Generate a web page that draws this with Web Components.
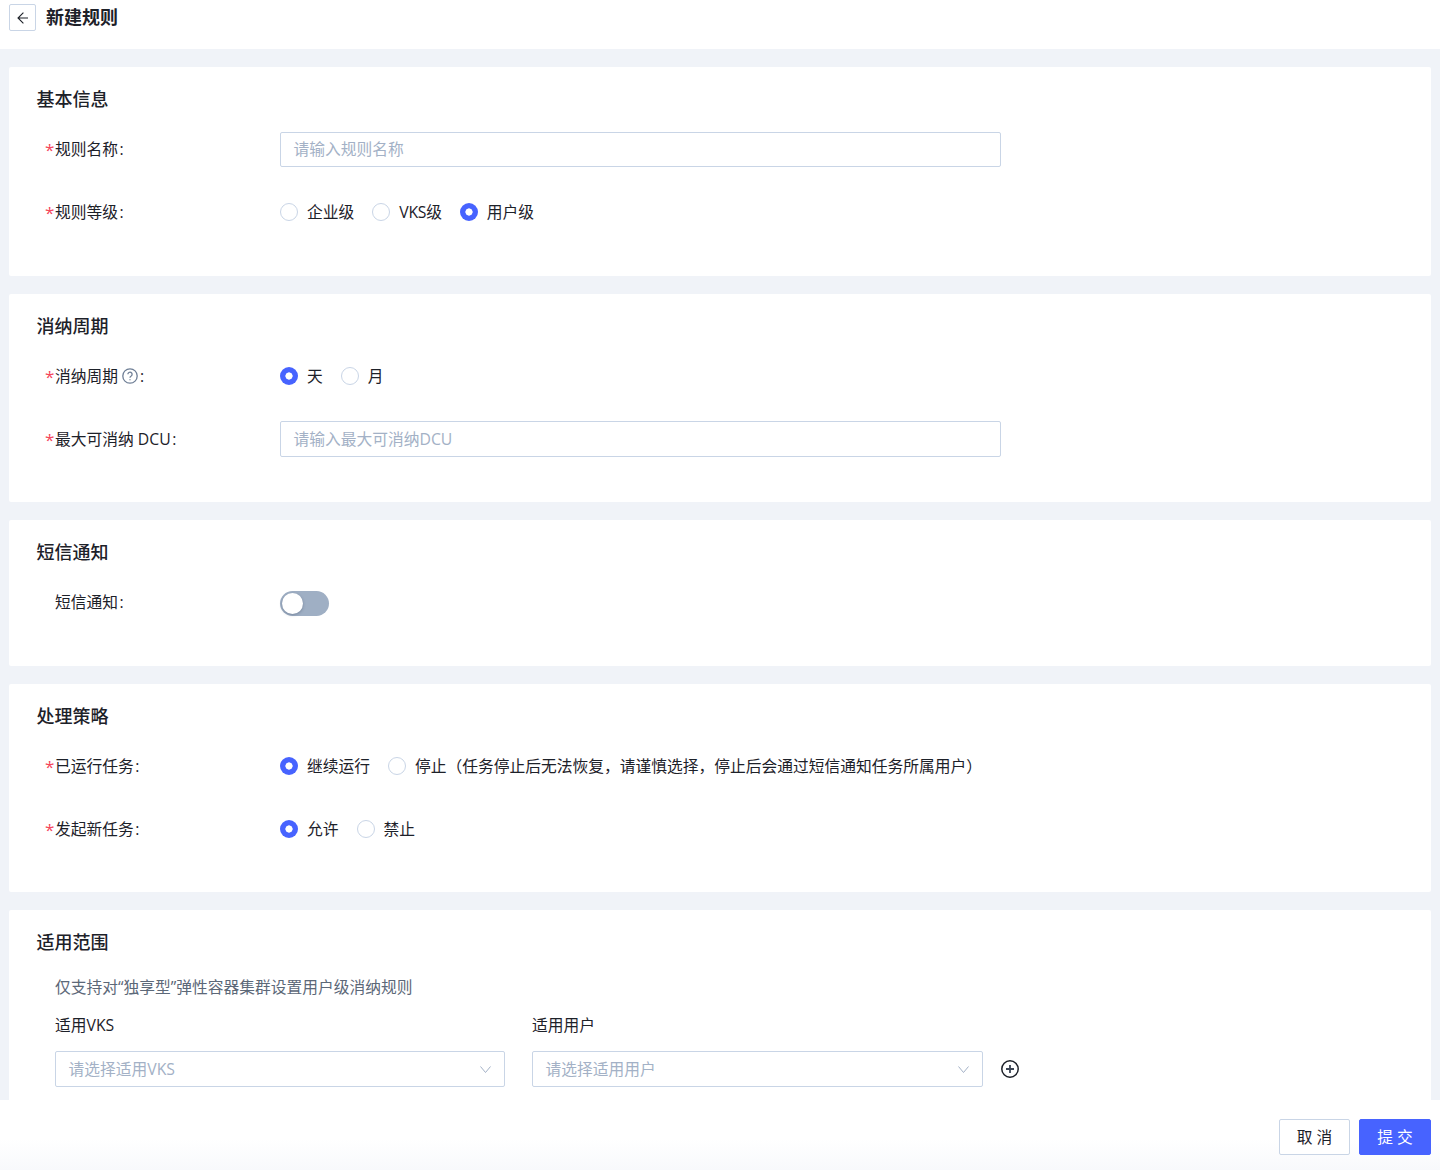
<!DOCTYPE html>
<html lang="zh">
<head>
<meta charset="utf-8">
<title>新建规则</title>
<style>
html, body { margin: 0; height: 1170px; overflow: hidden; }
body {
    background: #f0f3f8;
    color: #1d2129;
    font-family: "Open Sans", "Noto Sans CJK SC", sans-serif;
    font-size: 15.75px;
}
rule-page { height: 1170px; }
</style>
</head>
<body>
<rule-page>
    <page-header slot="header">新建规则</page-header>

    <form-card title="基本信息" height="209">
        <form-row label="规则名称" required>
            <text-input placeholder="请输入规则名称" height="35"></text-input>
        </form-row>
        <form-row label="规则等级" required>
            <radio-option>企业级</radio-option>
            <radio-option style="letter-spacing: -.25px">VKS级</radio-option>
            <radio-option checked>用户级</radio-option>
        </form-row>
    </form-card>

    <form-card title="消纳周期" height="208">
        <form-row label="消纳周期" required help>
            <radio-option checked>天</radio-option>
            <radio-option>月</radio-option>
        </form-row>
        <form-row label="最大可消纳 DCU" required>
            <text-input placeholder="请输入最大可消纳DCU" height="36"></text-input>
        </form-row>
    </form-card>

    <form-card title="短信通知" height="146">
        <form-row label="短信通知">
            <toggle-switch></toggle-switch>
        </form-row>
    </form-card>

    <form-card title="处理策略" height="208">
        <form-row label="已运行任务" required>
            <radio-option checked>继续运行</radio-option>
            <radio-option>停止（任务停止后无法恢复，请谨慎选择，停止后会通过短信通知任务所属用户）</radio-option>
        </form-row>
        <form-row label="发起新任务" required>
            <radio-option checked>允许</radio-option>
            <radio-option>禁止</radio-option>
        </form-row>
    </form-card>

    <form-card title="适用范围" height="260">
        <scope-picker note="仅支持对“独享型”弹性容器集群设置用户级消纳规则"></scope-picker>
    </form-card>

    <footer-bar slot="footer">
        <action-button>取 消</action-button>
        <action-button primary>提 交</action-button>
    </footer-bar>
</rule-page>

<script>
class RulePage extends HTMLElement {
    constructor() {
        super();
        this.attachShadow({mode: 'open'});
        this.shadowRoot.innerHTML = `
<style>
    :host { display: grid; grid-template-rows: 49px 1fr 70px; }
    main {
        display: flex;
        flex-direction: column;
        gap: 18px;
        padding: 18px 9px 0;
        overflow: hidden;
        min-height: 0;
    }
</style>
<slot name="header"></slot>
<main><slot></slot></main>
<slot name="footer"></slot>`;
    }
}

class PageHeader extends HTMLElement {
    constructor() {
        super();
        this.attachShadow({mode: 'open'});
        this.shadowRoot.innerHTML = `
<style>
    :host {
        display: flex;
        align-items: flex-start;
        gap: 10px;
        padding: 4px 9px 0;
        background: #fff;
        font-size: 18px;
        font-weight: 700;
        line-height: 27px;
    }
    button {
        display: flex;
        align-items: center;
        justify-content: center;
        box-sizing: border-box;
        width: 27px;
        height: 27px;
        padding: 0;
        background: #fff;
        border: 1px solid #c9d5e6;
        border-radius: 2px;
    }
</style>
<button aria-label="返回">
    <svg width="12" height="12" viewBox="0 0 12 12" fill="none" stroke="#1d2129" stroke-width="1.1">
        <path d="M11 6H1M6.4 .6 1 6l5.4 5.4"/>
    </svg>
</button>
<slot></slot>`;
    }
}

class FormCard extends HTMLElement {
    constructor() {
        super();
        this.attachShadow({mode: 'open'});
        this.shadowRoot.innerHTML = `
<style>
    :host {
        display: block;
        flex: none;
        box-sizing: border-box;
        padding: 19px 28px 0;
        background: #fff;
        border-radius: 2px;
    }
    h2 {
        margin: 0 0 18px -0.5px;
        font-size: 18px;
        font-weight: 500;
        line-height: 27px;
    }
</style>
<h2></h2>
<slot></slot>`;
    }
    connectedCallback() {
        this.shadowRoot.querySelector('h2').textContent = this.getAttribute('title');
        this.removeAttribute('title');
        this.style.height = this.getAttribute('height') + 'px';
    }
}

class FormRow extends HTMLElement {
    constructor() {
        super();
        this.attachShadow({mode: 'open'});
        this.shadowRoot.innerHTML = `
<style>
    :host {
        display: flex;
        align-items: center;
        min-height: 36px;
        margin-bottom: 27px;
    }
    .label {
        display: flex;
        align-items: center;
        flex: none;
        box-sizing: border-box;
        width: 243px;
        padding-left: 18px;
        white-space: nowrap;
        line-height: 24px;
    }
    .star {
        flex: none;
        width: 10px;
        margin-left: -10px;
        color: #f5455a;
        font-size: 17px;
        transform: translateY(1px);
    }
    svg { margin: 0 .5px 0 4px; }
    .colon { margin-left: 1.5px; }
    .controls { display: flex; align-items: center; gap: 18px; }
</style>
<div class="label"></div>
<div class="controls"><slot></slot></div>`;
    }
    connectedCallback() {
        let label = this.shadowRoot.querySelector('.label');
        let star = this.hasAttribute('required') ? '<span class="star">*</span>' : '';
        let help = this.hasAttribute('help') ? `
            <svg width="16" height="16" viewBox="0 0 16 16" fill="none" stroke="#6f7f96" stroke-width="1.3">
                <circle cx="8" cy="8" r="7.2"/>
                <path d="M5.9 6.3a2.1 2.1 0 1 1 3.3 1.7c-.8.5-1.2 1-1.2 1.8"/>
                <path d="M8 11.2v1.1"/>
            </svg>` : '';
        label.innerHTML = `${star}<span>${this.getAttribute('label')}</span>${help}<span class="colon">:</span>`;
    }
}

class RadioOption extends HTMLElement {
    constructor() {
        super();
        this.attachShadow({mode: 'open'});
        this.shadowRoot.innerHTML = `
<style>
    :host {
        display: inline-flex;
        align-items: center;
        gap: 9px;
        line-height: 24px;
        white-space: nowrap;
    }
    i {
        box-sizing: border-box;
        width: 18px;
        height: 18px;
        border: 1px solid #c9d5e6;
        border-radius: 50%;
        background: #fff;
    }
    :host([checked]) i {
        border: 0;
        background: radial-gradient(circle, #fff 3.3px, #4763ff 3.9px);
    }
</style>
<i></i><span><slot></slot></span>`;
    }
}

class TextInput extends HTMLElement {
    constructor() {
        super();
        this.attachShadow({mode: 'open'});
        this.shadowRoot.innerHTML = `
<style>
    :host {
        display: flex;
        align-items: center;
        box-sizing: border-box;
        width: 721px;
        padding: 0 12.5px;
        background: #fff;
        border: 1px solid #c9d5e6;
        border-radius: 2px;
        color: #a3b1c6;
        line-height: 24px;
    }
</style>
<span></span>`;
    }
    connectedCallback() {
        this.shadowRoot.querySelector('span').textContent = this.getAttribute('placeholder');
        this.style.height = this.getAttribute('height') + 'px';
    }
}

class SelectInput extends HTMLElement {
    constructor() {
        super();
        this.attachShadow({mode: 'open'});
        this.shadowRoot.innerHTML = `
<style>
    :host {
        display: flex;
        align-items: center;
        justify-content: space-between;
        box-sizing: border-box;
        height: 36px;
        padding: 0 13px 0 12.5px;
        background: #fff;
        border: 1px solid #c9d5e6;
        border-radius: 2px;
        color: #a3b1c6;
        line-height: 24px;
    }
</style>
<span></span>
<svg width="11" height="7" viewBox="0 0 11 7" fill="none" stroke="#a3b1c6" stroke-width="1">
    <path d="M.5 .5l5 6 5-6"/>
</svg>`;
    }
    connectedCallback() {
        this.shadowRoot.querySelector('span').textContent = this.getAttribute('placeholder');
    }
}

class ToggleSwitch extends HTMLElement {
    constructor() {
        super();
        this.attachShadow({mode: 'open'});
        this.shadowRoot.innerHTML = `
<style>
    :host {
        display: block;
        box-sizing: border-box;
        width: 49px;
        height: 25px;
        margin-top: 2px;
        padding: 2px;
        background: #9fafc4;
        border-radius: 13px;
    }
    i {
        display: block;
        width: 21px;
        height: 21px;
        background: #fff;
        border-radius: 50%;
        box-shadow: 0 1px 3px rgba(40, 55, 80, .35);
    }
</style>
<i></i>`;
    }
}

class ScopePicker extends HTMLElement {
    constructor() {
        super();
        this.attachShadow({mode: 'open'});
        this.shadowRoot.innerHTML = `
<style>
    :host { display: block; padding: 1px 0 0 18px; }
    p { margin: 0 0 14px; color: #5c6878; line-height: 24px; }
    .grid {
        display: grid;
        grid-template-columns: 450px 451px 18px;
        column-gap: 27px;
        row-gap: 14px;
        align-items: center;
    }
    .plus { margin-left: -9px; }
    .title { line-height: 24px; }
</style>
<p></p>
<div class="grid">
    <div class="title">适用VKS</div>
    <div class="title">适用用户</div>
    <div></div>
    <select-input placeholder="请选择适用VKS"></select-input>
    <select-input placeholder="请选择适用用户"></select-input>
    <svg class="plus" width="18" height="18" viewBox="0 0 18 18" fill="none" stroke="#1d2129">
        <circle cx="9" cy="9" r="8.2" stroke-width="1.5"/>
        <path d="M5 9h8M9 5v8" stroke="#3b4454" stroke-width="1.8"/>
    </svg>
</div>`;
    }
    connectedCallback() {
        this.shadowRoot.querySelector('p').textContent = this.getAttribute('note');
    }
}

class FooterBar extends HTMLElement {
    constructor() {
        super();
        this.attachShadow({mode: 'open'});
        this.shadowRoot.innerHTML = `
<style>
    :host {
        display: flex;
        justify-content: flex-end;
        gap: 9px;
        box-sizing: border-box;
        padding: 19px 9px 0;
        background: linear-gradient(#fff 55%, #f8f9fc);
    }
</style>
<slot></slot>`;
    }
}

class ActionButton extends HTMLElement {
    constructor() {
        super();
        this.attachShadow({mode: 'open'});
        this.shadowRoot.innerHTML = `
<style>
    :host {
        display: flex;
        align-items: center;
        justify-content: center;
        box-sizing: border-box;
        width: 71px;
        height: 36px;
        background: #fff;
        border: 1px solid #c9d5e6;
        border-radius: 2px;
        line-height: 24px;
    }
    :host([primary]) {
        width: 72px;
        background: #4763ff;
        border-color: #4763ff;
        color: #fff;
    }
</style>
<slot></slot>`;
    }
}

customElements.define('rule-page', RulePage);
customElements.define('page-header', PageHeader);
customElements.define('form-card', FormCard);
customElements.define('form-row', FormRow);
customElements.define('radio-option', RadioOption);
customElements.define('text-input', TextInput);
customElements.define('select-input', SelectInput);
customElements.define('toggle-switch', ToggleSwitch);
customElements.define('scope-picker', ScopePicker);
customElements.define('footer-bar', FooterBar);
customElements.define('action-button', ActionButton);
</script>
</body>
</html>
